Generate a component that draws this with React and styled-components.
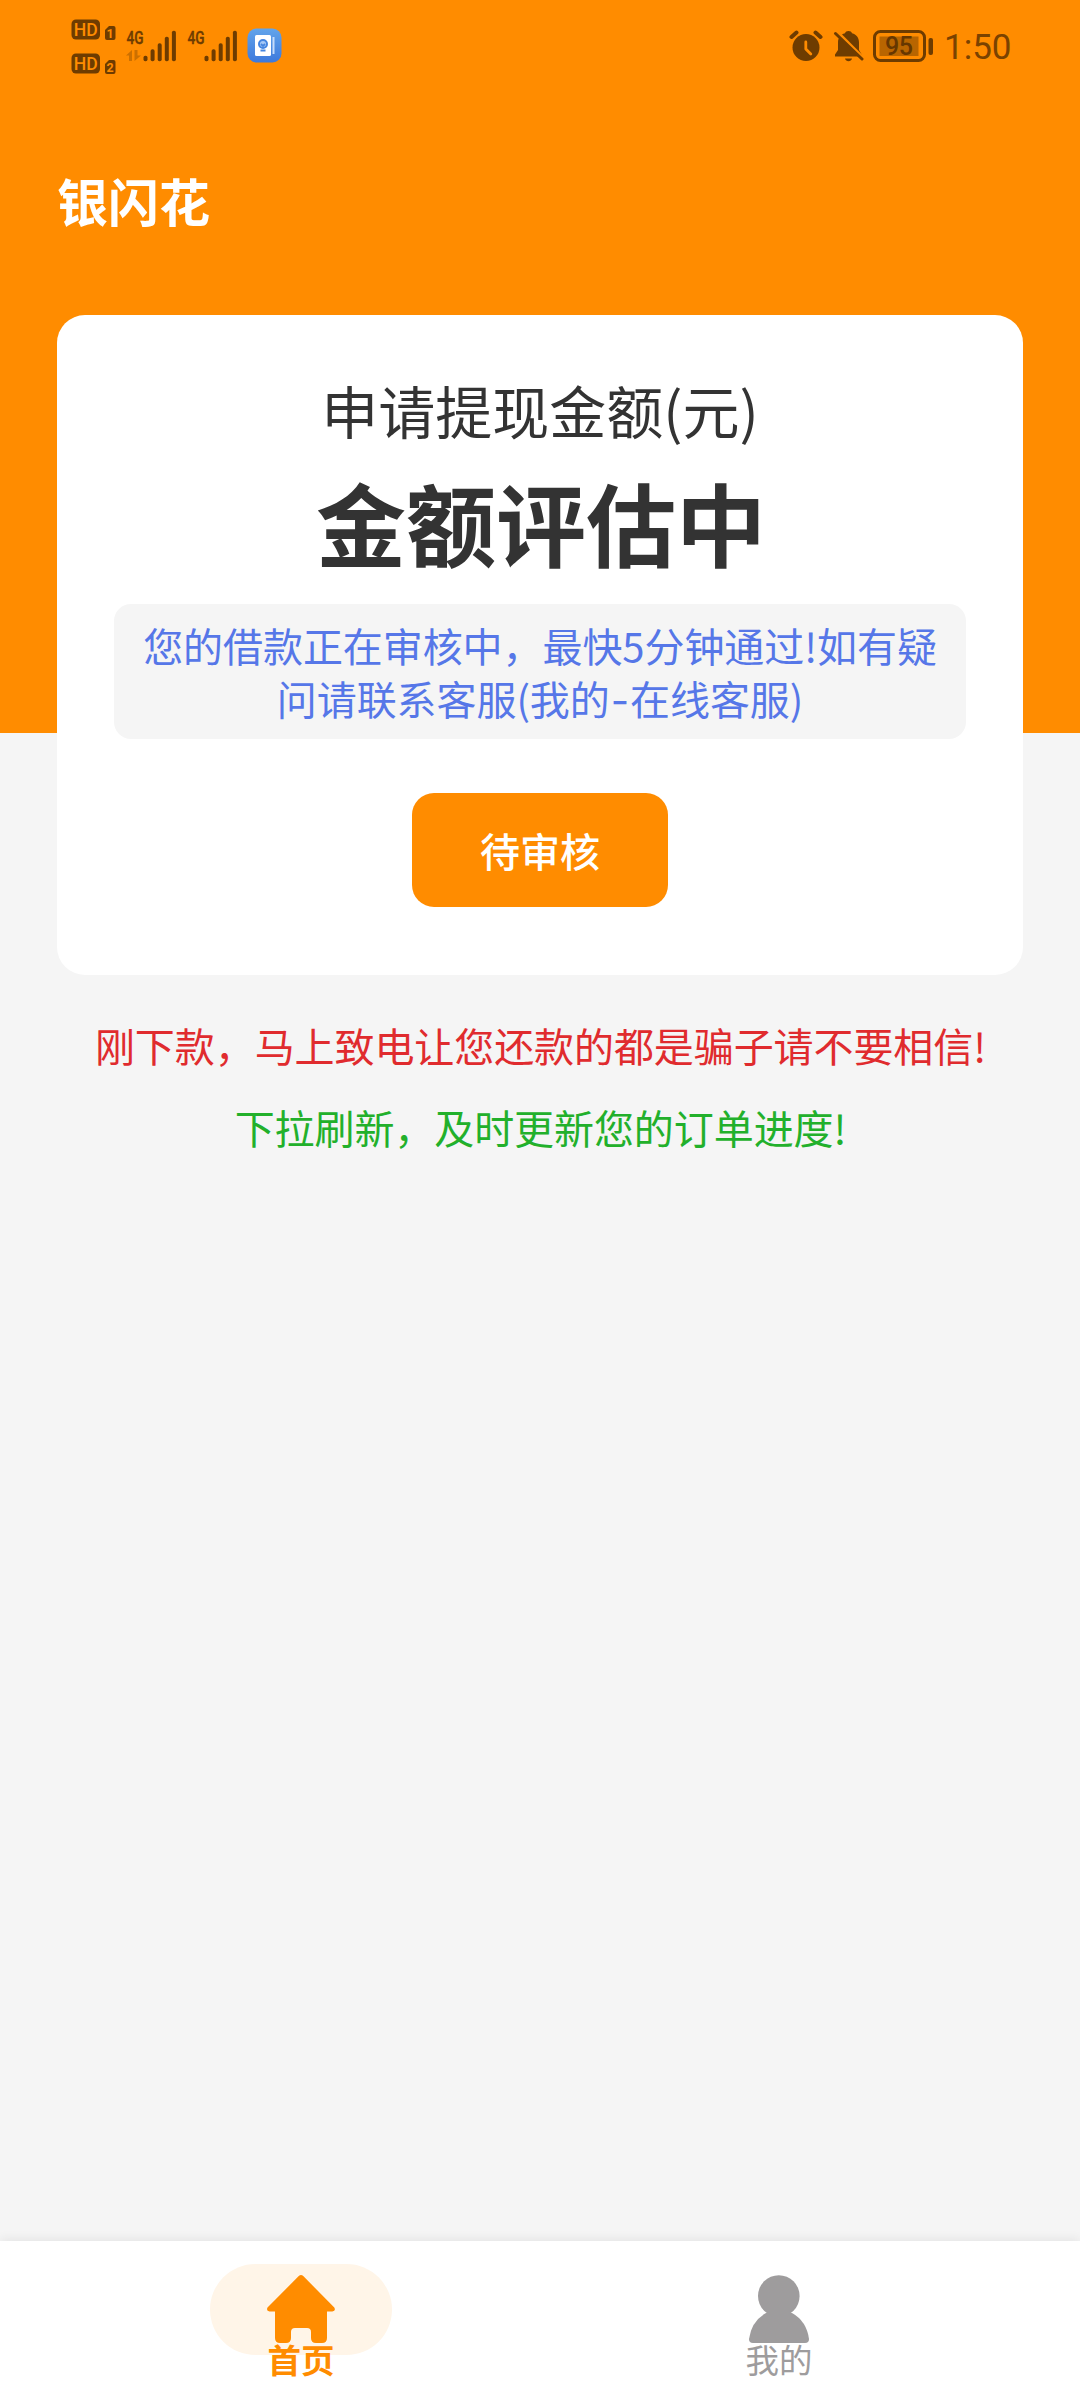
import styled, { createGlobalStyle } from "styled-components";

const GlobalStyle = createGlobalStyle`
  * {
    box-sizing: border-box;
  }
  body {
    margin: 0;
    background: #f5f5f5;
    font-family: "Noto Sans CJK SC", sans-serif;
  }
`;

const INK = "#6e3c00";

const Page = styled.div`
  display: flex;
  flex-direction: column;
  width: 1080px;
  height: 2400px;
  overflow: hidden;
  background: #f5f5f5;
`;

const Hero = styled.header`
  flex: none;
  height: 733px;
  background: #ff8c00;
`;

const StatusBar = styled.div`
  display: flex;
  justify-content: space-between;
  height: 92px;
  padding: 18px 71px 0 70px;
`;

const StatusGroup = styled.div`
  display: flex;
  align-items: flex-start;
  gap: ${(props) => props.$gap || 0}px;

  svg {
    display: block;
    flex: none;
  }
`;

const HdStack = styled.div`
  display: flex;
  flex-direction: column;
  gap: 10px;
  margin: 1px 10px 0 0;
`;

const Clock = styled.span`
  margin-top: 9px;
  width: 65px;
  font: 400 35px/41px Roboto, sans-serif;
  color: #7a4200;
  white-space: nowrap;
`;

const AppName = styled.h1`
  margin: 0;
  padding: 69px 0 0 57px;
  height: 223px;
  font-size: 51px;
  line-height: 78px;
  font-weight: 700;
  color: #fff;
`;

const Card = styled.section`
  display: flex;
  flex-direction: column;
  align-items: center;
  width: 966px;
  height: 660px;
  margin: 0 auto;
  padding-top: 57px;
  border-radius: 28px;
  background: #fff;
  color: #333;
`;

const CardLabel = styled.div`
  font-size: 57px;
  line-height: 74px;
`;

const CardTitle = styled.div`
  margin-top: 21px;
  padding-left: 2px;
  font-size: 90px;
  line-height: 108px;
  font-weight: 700;
`;

const Hint = styled.p`
  width: 852px;
  height: 135px;
  margin: 29px 0 0;
  padding: 15px 0 0;
  border-radius: 17px;
  background: #f5f5f5;
  color: #5677e8;
  font-size: 40px;
  line-height: 53px;
  letter-spacing: -0.07px;
  text-align: center;
  white-space: nowrap;
`;

const Dash = styled.span`
  padding: 0 1px;
  font-family: Inter, sans-serif;
  line-height: 1;
`;

const Button = styled.button`
  width: 256px;
  height: 114px;
  margin-top: 54px;
  padding: 0;
  border: 0;
  border-radius: 22px;
  background: #ff8c00;
  color: #fff;
  font: 500 40px/114px "Noto Sans CJK SC", sans-serif;
`;

const Notices = styled.div`
  flex: 1;
  padding-top: 282px;
`;

const Notice = styled.p`
  margin: 0 0 22px;
  padding-left: 1px;
  font-size: 40px;
  line-height: 60px;
  letter-spacing: -0.08px;
  text-align: center;
  color: ${(props) => props.$color};
`;

const TabBar = styled.nav`
  display: flex;
  flex: none;
  height: 159px;
  padding: 23px 62px 0;
  background: #fff;
  box-shadow: 0 -2px 10px rgba(0, 0, 0, 0.07);
`;

const Tab = styled.a`
  display: flex;
  flex: 1;
  flex-direction: column;
  align-items: center;
  color: ${(props) => (props.$active ? "#ff8c00" : "#9e9c9d")};
  font-weight: ${(props) => (props.$active ? 700 : 400)};
`;

const TabIcon = styled.span`
  display: flex;
  justify-content: center;
  width: 182px;
  height: 91px;
  padding-top: 11px;
  border-radius: 46px;
  background: ${(props) => (props.$active ? "#fff5e8" : "transparent")};
`;

const TabText = styled.span`
  margin-top: -16px;
  font-size: 33.5px;
  line-height: 40px;
`;

const HdBadge = ({ sim }) => (
  <svg width="46" height="24" viewBox="0 0 46 24">
    <rect x="1.500" y="0.500" width="28.500" height="20" rx="4.500" fill={INK} />
    <text
      x="15.700"
      y="17"
      textAnchor="middle"
      textLength="24"
      lengthAdjust="spacingAndGlyphs"
      fontFamily="Roboto"
      fontSize="18.500"
      fontWeight="500"
      fill="#ff8c00"
    >
      HD
    </text>
    <path d="M39 7h4.500a2 2 0 0 1 2 2v10a2 2 0 0 1-2 2H37a2 2 0 0 1-2-2v-8z" fill={INK} />
    <text
      x="40.200"
      y="18.700"
      textAnchor="middle"
      fontFamily="Roboto"
      fontSize="12.500"
      fontWeight="700"
      fill="#ff8c00"
    >
      {sim}
    </text>
  </svg>
);

const Signal = ({ width, arrows }) => (
  <svg width={width} height="46" viewBox={`0 0 ${width} 46`}>
    <text
      x="0.500"
      y="16"
      textLength="17"
      lengthAdjust="spacingAndGlyphs"
      fontFamily="Roboto"
      fontSize="18.500"
      fontWeight="500"
      stroke={INK}
      strokeWidth="0.400"
      fill={INK}
    >
      4G
    </text>
    {arrows && (
      <path d="M0 27.500l6-5.500v11H3v-5.500zM8.500 22v11l6.500-5.500h-3.500V22z" fill={INK} opacity="0.35" />
    )}
    {[5.5, 12, 18, 24.5, 30.5].map((h, i) => (
      <rect
        key={h}
        x={17.5 + i * 7.1}
        y={33.2 - h}
        width="4"
        height={h}
        rx="1.800"
        fill={INK}
      />
    ))}
  </svg>
);

const SignalWrap = styled.div`
  display: flex;
  padding-top: 10px;
`;

const AppBadge = () => (
  <svg width="35" height="35" viewBox="0 0 35 35">
    <defs>
      <linearGradient id="badge" x1="0" y1="0" x2="0" y2="1">
        <stop offset="0" stopColor="#62a4ea" />
        <stop offset="1" stopColor="#3d79dc" />
      </linearGradient>
    </defs>
    <rect x="0.500" y="0.500" width="34" height="34" rx="9" fill="url(#badge)" />
    <rect x="8" y="7" width="16" height="21" rx="1.500" fill="#fff" />
    <path d="M26.500 9v17" stroke="#c6dcfa" strokeWidth="2" />
    <circle cx="16" cy="16" r="4" fill="#a6c9f7" stroke="#4585e0" strokeWidth="2" />
    <path d="M14 16l2 2 2-2M13.500 22.500h5" fill="none" stroke="#4585e0" strokeWidth="1.800" />
  </svg>
);

const AlarmIcon = () => (
  <svg width="34" height="46" viewBox="0 0 34 46">
    <circle cx="17" cy="29.500" r="13.500" fill={INK} />
    <path d="M2.500 19l5-4.500M31.500 19l-5-4.500" stroke={INK} strokeWidth="4" strokeLinecap="round" />
    <path
      d="M16.800 24v7l5 5"
      fill="none"
      stroke="#ff8c00"
      strokeWidth="2.800"
      strokeLinecap="round"
      strokeLinejoin="round"
    />
  </svg>
);

const BellOffIcon = () => (
  <svg width="32" height="46" viewBox="0 0 32 46">
    <path
      d="M16.500 13c1.800 0 3 .8 3.500 2.300 4.500 1.200 7 4.500 7 9.200v7.500l3 5v1.500H3v-2l3-4.500v-7.500c0-4.500 2.500-8 7-9.200.5-1.500 1.700-2.300 3.500-2.300z"
      fill={INK}
    />
    <path d="M13 40.500h7c-.5 1.800-1.800 2.700-3.500 2.700s-3-.9-3.500-2.700z" fill={INK} />
    <path d="M5 13.500l27 27" stroke="#ff8c00" strokeWidth="3" />
    <path d="M3.500 15.500l26.500 25.500" stroke={INK} strokeWidth="3" strokeLinecap="round" />
  </svg>
);

const Battery = () => (
  <svg width="62" height="46" viewBox="0 0 62 46">
    <rect x="1.500" y="13.500" width="50" height="29" rx="6" fill="none" stroke={INK} strokeWidth="3" />
    <rect x="6.500" y="18.500" width="39" height="19.500" fill="#b86500" />
    <rect x="55.500" y="20" width="4.500" height="17" rx="2" fill={INK} />
    <text
      x="26"
      y="36.800"
      textAnchor="middle"
      textLength="28"
      fontFamily="Roboto"
      fontSize="25"
      fontWeight="500"
      fill="#663700"
    >
      95
    </text>
  </svg>
);

const HomeIcon = () => (
  <svg width="68" height="68" viewBox="0 0 68 68">
    <path
      d="M32 .8q2-1.600 4 0L67.300 32.500q1.800 3.500-2 3.900H60V63q0 5-5 5H49q-5 0-5-5V57q0-4-4-4H28q-4 0-4 4v6q0 5-5 5H13q-5 0-5-5V36.400H2.500q-3.600-.4-2-3.900z"
      fill="currentColor"
    />
  </svg>
);

const UserIcon = () => (
  <svg width="60" height="68" viewBox="0 0 60 68">
    <circle cx="29.800" cy="21" r="20.800" fill="currentColor" />
    <path
      d="M17 38h26q14.500 8 17 26 0 4-4 4H4q-4 0-4-4 2.500-18 17-26z"
      fill="currentColor"
    />
  </svg>
);

const tabs = [
  { name: "首页", icon: HomeIcon, active: true },
  { name: "我的", icon: UserIcon, active: false },
];

const App = () => {
  return (
    <Page>
      <GlobalStyle />
      <Hero>
        <StatusBar>
          <StatusGroup>
            <HdStack>
              <HdBadge sim="1" />
              <HdBadge sim="2" />
            </HdStack>
            <SignalWrap>
              <Signal width={61} arrows />
              <Signal width={60} />
              <AppBadge />
            </SignalWrap>
          </StatusGroup>
          <StatusGroup $gap={9}>
            <AlarmIcon />
            <BellOffIcon />
            <Battery />
            <Clock>1:50</Clock>
          </StatusGroup>
        </StatusBar>
        <AppName>银闪花</AppName>
        <Card>
          <CardLabel>申请提现金额(元)</CardLabel>
          <CardTitle>金额评估中</CardTitle>
          <Hint>
            您的借款正在审核中，最快5分钟通过!如有疑
            <br />
            问请联系客服(我的<Dash>-</Dash>在线客服)
          </Hint>
          <Button>待审核</Button>
        </Card>
      </Hero>
      <Notices>
        <Notice $color="#e02b2e">刚下款，马上致电让您还款的都是骗子请不要相信!</Notice>
        <Notice $color="#22b02b">下拉刷新，及时更新您的订单进度!</Notice>
      </Notices>
      <TabBar>
        {tabs.map(({ name, icon: Icon, active }) => (
          <Tab key={name} $active={active}>
            <TabIcon $active={active}>
              <Icon />
            </TabIcon>
            <TabText>{name}</TabText>
          </Tab>
        ))}
      </TabBar>
    </Page>
  );
};

export default App;
